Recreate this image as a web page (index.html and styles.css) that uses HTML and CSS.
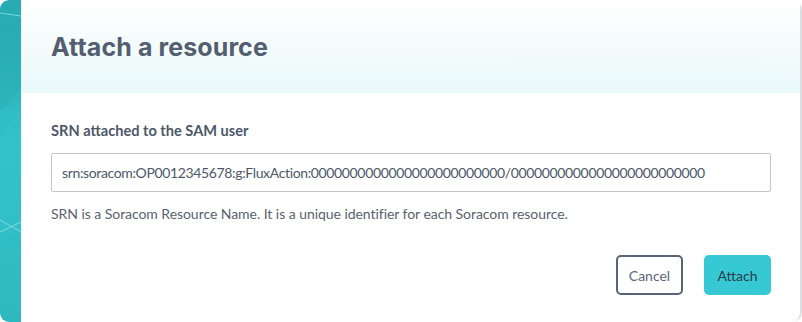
FILE: index.html
```html
<!DOCTYPE html>
<html>
<head>
<meta charset="utf-8">
<link rel="stylesheet" href="styles.css">
</head>
<body>
<div class="frame">
  <div class="deco">
    <svg width="21" height="322" viewBox="0 0 21 322" preserveAspectRatio="none">
      <polygon points="0,20 21,20 21,100 0,110" fill="#27a9b1" opacity="0.5"/>
      <polygon points="0,110 21,88 21,95 0,140" fill="#2fbac2" opacity="0.6"/>
      <line x1="0" y1="13" x2="21" y2="16" stroke="#8fe3e8" stroke-width="0.8"/>
      <line x1="0" y1="220" x2="21" y2="232" stroke="#8fe3e8" stroke-width="0.8"/>
      <line x1="0" y1="232" x2="21" y2="222" stroke="#8fe3e8" stroke-width="0.8"/>
    </svg>
  </div>
  <div class="dialog">
    <div class="header">
      <h1 class="title">Attach a resource</h1>
    </div>
    <div class="body">
      <label class="label">SRN attached to the SAM user</label>
      <div class="input">srn:soracom:OP0012345678:g:FluxAction:0000000000000000000000000/0000000000000000000000000</div>
      <p class="help">SRN is a Soracom Resource Name. It is a unique identifier for each Soracom resource.</p>
      <div class="actions">
        <button class="btn btn-cancel">Cancel</button>
        <button class="btn btn-primary">Attach</button>
      </div>
    </div>
  </div>
</div>
</body>
</html>
```
FILE: styles.css
```css
html, body {
  margin: 0;
  padding: 0;
  background: #ffffff;
}
.frame {
  display: flex;
  width: 802px;
  height: 322px;
  border-radius: 9px;
  overflow: hidden;
}
.deco {
  width: 21px;
  flex: none;
  background: linear-gradient(180deg, #27aab2 0%, #34c3cb 45%, #2fb8c0 100%);
}
.deco svg { display: block; }
.dialog {
  flex: 1;
  display: flex;
  flex-direction: column;
  background: #fff;
  border-right: 2px solid #dcdee1;
  border-top-right-radius: 10px;
  border-bottom-right-radius: 10px;
}
.header {
  height: 93px;
  background: linear-gradient(180deg, #ffffff 0%, #e9f8f9 100%);
  padding-left: 30px;
  display: flex;
  align-items: center;
}
.title {
  margin: 0;
  font-family: Inter, "Liberation Sans", sans-serif;
  font-weight: 700;
  font-size: 25px;
  color: #535e70;
  letter-spacing: 0.1px;
}
.body {
  padding: 29px 29px 0 30px;
  font-family: Lato, "Noto Sans", sans-serif;
}
.label {
  display: block;
  font-weight: 700;
  font-size: 14.6px;
  color: #4d5869;
  line-height: 18px;
}
.input {
  margin-top: 13px;
  height: 37px;
  box-sizing: content-box;
  border: 1px solid #c3c6cc;
  border-radius: 2px;
  padding: 0 10px;
  display: flex;
  align-items: center;
  font-size: 14px;
  letter-spacing: -0.36px;
  color: #4d5869;
  white-space: nowrap;
}
.help {
  margin: 13px 0 0;
  font-size: 14px;
  line-height: 18px;
  color: #59626f;
  letter-spacing: -0.05px;
}
.actions {
  margin-top: 32px;
  display: flex;
  justify-content: flex-end;
  gap: 21px;
}
.btn {
  height: 40px;
  width: 67px;
  border-radius: 5px;
  font-family: Lato, "Noto Sans", sans-serif;
  font-size: 14px;
  cursor: pointer;
}
.btn-cancel {
  background: #fff;
  border: 2px solid #586579;
  color: #5b6577;
}
.btn-primary {
  background: #37c9d3;
  border: none;
  color: #2b3c4f;
}
```
